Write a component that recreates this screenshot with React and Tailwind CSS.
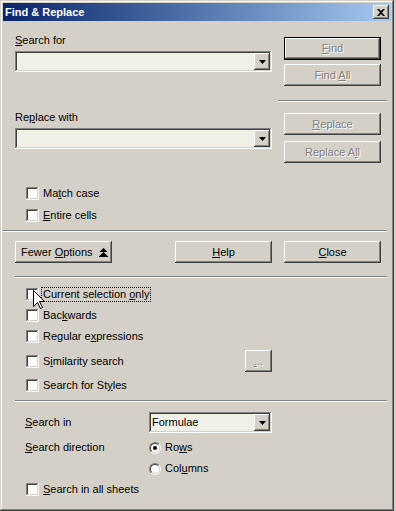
import React from 'react';

const raised =
  'shadow-[inset_-1px_-1px_#404040,inset_1px_1px_#ffffff,inset_-2px_-2px_#808080,inset_2px_2px_#d4d0c8]';
const sunken =
  'shadow-[inset_-1px_-1px_#ffffff,inset_1px_1px_#808080,inset_-2px_-2px_#d4d0c8,inset_2px_2px_#404040]';
const disabledText = 'text-[#808080] [text-shadow:1px_1px_0_#ffffff]';

const U = ({ children }) => <span className="underline underline-offset-[1px]">{children}</span>;

const Button = ({ children, disabled, isDefault, className = '' }) => {
  if (isDefault) {
    return (
      <div className={`border border-black ${className}`}>
        <div className={`h-full flex items-center justify-center ${raised} ${disabled ? disabledText : 'text-black'}`}>
          <span>{children}</span>
        </div>
      </div>
    );
  }
  return (
    <div className={`flex items-center justify-center ${raised} ${disabled ? disabledText : 'text-black'} ${className}`}>
      {children}
    </div>
  );
};

const ArrowDown = () => (
  <svg width="7" height="4" viewBox="0 0 7 4">
    <polygon points="0,0 7,0 3.5,4" fill="#000" />
  </svg>
);

const Combo = ({ value, className = '' }) => (
  <div className={`h-[21px] bg-[#f0f1e6] ${sunken} flex items-center p-[2px] ${className}`}>
    <div className="flex-1 pl-[1px] text-black leading-[13px]">{value}</div>
    <div className={`w-[16px] h-[17px] bg-[#d4d0c8] ${raised} flex items-center justify-center`}>
      <ArrowDown />
    </div>
  </div>
);

const Checkbox = () => <div className={`w-[13px] h-[13px] bg-white shrink-0 ${sunken}`} />;

const CheckRow = ({ children, focus, className = '' }) => (
  <div className={`flex items-center h-[13px] pl-[11px] ${className}`}>
    <Checkbox />
    <div className={`ml-[3px] leading-[13px] px-[1px] ${focus ? 'outline outline-1 outline-dotted outline-black' : ''}`}>
      {children}
    </div>
  </div>
);

const Radio = ({ checked }) => (
  <div className="w-[12px] h-[12px] rounded-full border border-t-[#808080] border-l-[#808080] border-b-white border-r-white shrink-0">
    <div className="w-full h-full rounded-full border border-t-[#404040] border-l-[#404040] border-b-[#d4d0c8] border-r-[#d4d0c8] bg-white flex items-center justify-center">
      {checked && <div className="w-[4px] h-[4px] rounded-full bg-black" />}
    </div>
  </div>
);

const Separator = ({ className = '' }) => (
  <div className={`h-[2px] border-t border-t-[#808080] border-b border-b-white ${className}`} />
);

const FewerIcon = () => (
  <svg width="9" height="9" viewBox="0 0 9 9">
    <polygon points="4.5,0 8.5,4 0.5,4" fill="#000" />
    <polygon points="4.5,4 8.5,8 0.5,8" fill="#000" />
    <rect x="0" y="8" width="9" height="1" fill="#000" />
  </svg>
);

const Cursor = () => (
  <svg width="12" height="19" viewBox="0 0 12 19" className="absolute left-[33px] top-[290px]">
    <polygon
      points="0.5,0.5 0.5,16.5 4.5,12.5 7.5,18.5 9.5,17.5 6.5,11.5 11.5,11.5"
      fill="#fff"
      stroke="#000"
      strokeWidth="1"
    />
  </svg>
);

export default function App() {
  return (
    <div className="w-[396px] h-[511px] bg-[#d4d0c8]">
      <div
        className="relative w-[394px] h-[511px] bg-[#d4d0c8] p-[3px] text-[11px] text-black shadow-[inset_-1px_-1px_#404040,inset_1px_1px_#d4d0c8,inset_-2px_-2px_#808080,inset_2px_2px_#ffffff]"
        style={{ fontFamily: '"Liberation Sans", Arial, sans-serif' }}
      >
        {/* title bar */}
        <div className="h-[18px] bg-gradient-to-r from-[#0a246a] to-[#a6caf0] flex items-center justify-between pl-[2px] pr-[2px]">
          <div className="text-white font-bold text-[11px] leading-[13px]">Find &amp; Replace</div>
          <div className={`w-[16px] h-[14px] bg-[#d4d0c8] ${raised} flex items-center justify-center`}>
            <svg width="8" height="7" viewBox="0 0 8 7">
              <path d="M0,0 L2,0 L4,2 L6,0 L8,0 L5,3.5 L8,7 L6,7 L4,5 L2,7 L0,7 L3,3.5 Z" fill="#000" />
            </svg>
          </div>
        </div>

        {/* body */}
        <div className="pl-[12px]">
          <div className="flex items-start">
            <div className="w-[257px]">
              <div className="mt-[13px] h-[13px] leading-[13px]">
                <U>S</U>earch for
              </div>
              <Combo className="mt-[4px]" />
              <div className="mt-[39px] h-[13px] leading-[13px]">
                Re<U>p</U>lace with
              </div>
              <Combo className="mt-[4px]" />
            </div>
            <div className="ml-[12px] w-[97px]">
              <Button isDefault disabled className="mt-[16px] h-[23px]">
                <U>F</U>ind
              </Button>
              <Button disabled className="mt-[4px] h-[22px]">
                <span>
                  Find <U>A</U>ll
                </span>
              </Button>
              <Separator className="mt-[14px] -ml-[6px] w-[109px]" />
              <Button disabled className="mt-[11px] h-[22px]">
                <span>
                  <U>R</U>eplace
                </span>
              </Button>
              <Button disabled className="mt-[6px] h-[22px]">
                <span>
                  Replace A<U>l</U>l
                </span>
              </Button>
            </div>
          </div>

          <CheckRow className="mt-[24px]">
            Ma<U>t</U>ch case
          </CheckRow>
          <CheckRow className="mt-[9px]">
            <U>E</U>ntire cells
          </CheckRow>

          <Separator className="mt-[8px] -ml-[12px] w-[384px]" />

          <div className="mt-[9px] flex">
            <Button className="w-[97px] h-[22px] !justify-start pl-[6px] gap-[6px]">
              <span>
                Fewer <U>O</U>ptions
              </span>
              <FewerIcon />
            </Button>
            <Button className="ml-[63px] w-[97px] h-[22px]">
              <span>
                <U>H</U>elp
              </span>
            </Button>
            <Button className="ml-[12px] w-[97px] h-[22px]">
              <span>
                <U>C</U>lose
              </span>
            </Button>
          </div>

          <Separator className="mt-[13px] w-[372px]" />

          <CheckRow focus className="mt-[10px]">
            Current selection <U>o</U>nly
          </CheckRow>
          <CheckRow className="mt-[8px]">
            Bac<U>k</U>wards
          </CheckRow>
          <CheckRow className="mt-[8px]">
            Regular e<U>x</U>pressions
          </CheckRow>
          <div className="mt-[7px] h-[22px] flex items-center">
            <div className="w-[230px]">
              <CheckRow>
                S<U>i</U>milarity search
              </CheckRow>
            </div>
            <Button disabled className="w-[27px] h-[22px]">
              <span>
                <U>.</U>..
              </span>
            </Button>
          </div>
          <CheckRow className="mt-[7px]">
            Search for St<U>y</U>les
          </CheckRow>

          <Separator className="mt-[8px] w-[372px]" />

          <div className="mt-[10px] flex items-center h-[21px]">
            <div className="w-[134px] pl-[10px] leading-[13px]">
              <U>S</U>earch in
            </div>
            <Combo value="Formulae" className="w-[123px]" />
          </div>
          <div className="mt-[8px] flex items-center h-[13px]">
            <div className="w-[134px] pl-[10px] leading-[13px]">
              <U>S</U>earch direction
            </div>
            <Radio checked />
            <div className="ml-[4px] leading-[13px]">
              Ro<U>w</U>s
            </div>
          </div>
          <div className="mt-[8px] flex items-center h-[13px]">
            <div className="w-[134px]" />
            <Radio />
            <div className="ml-[4px] leading-[13px]">
              Col<U>u</U>mns
            </div>
          </div>
          <CheckRow className="mt-[8px]">
            <U>S</U>earch in all sheets
          </CheckRow>
        </div>

        <Cursor />
      </div>
    </div>
  );
}
